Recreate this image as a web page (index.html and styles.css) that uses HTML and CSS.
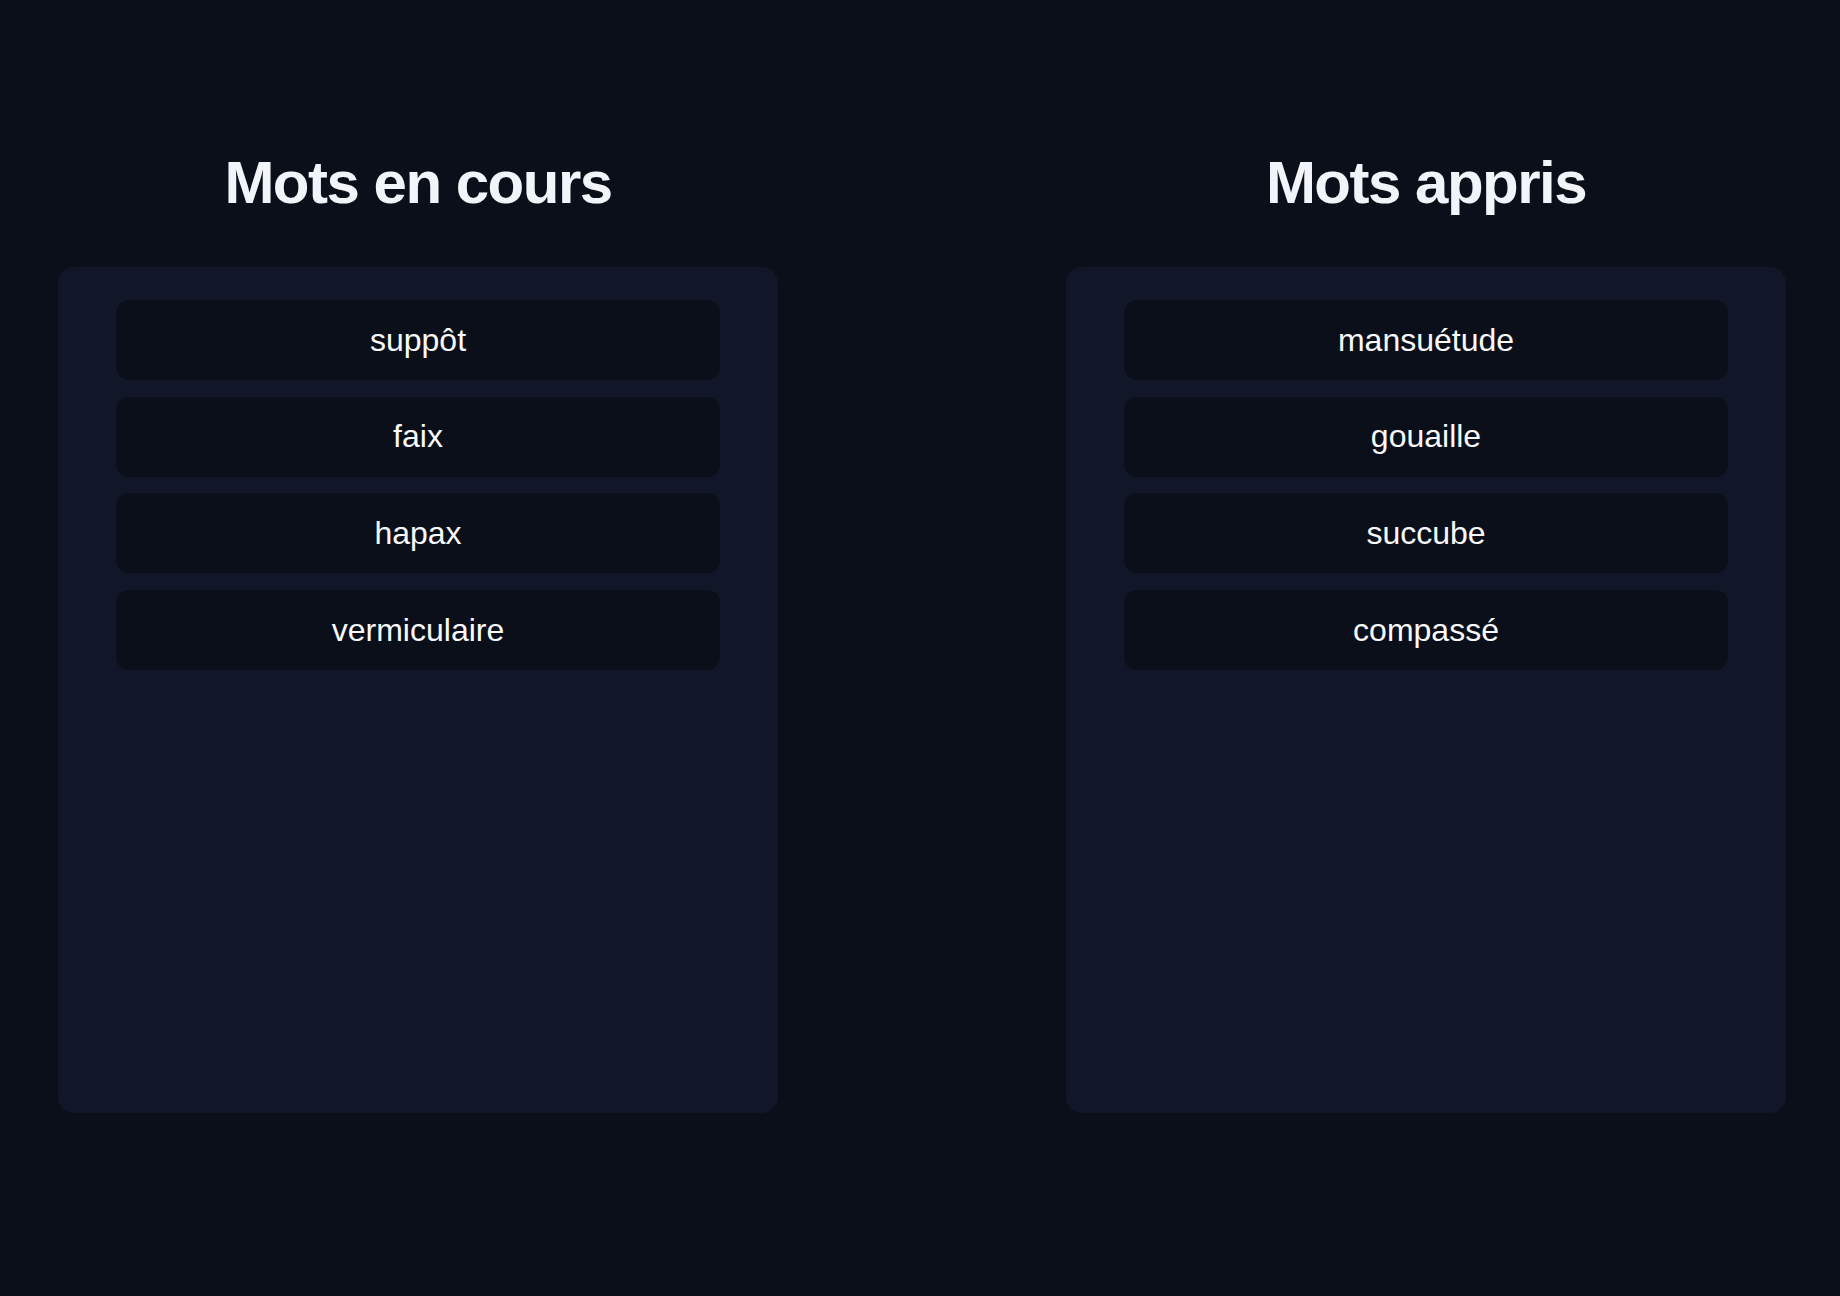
FILE: index.html
```html
<!DOCTYPE html>
<html lang="fr">
<head>
<meta charset="utf-8">
<title>Mots</title>
<link rel="stylesheet" href="styles.css">
</head>
<body>
<main class="board">
  <section class="column">
    <h1 class="column-title">Mots en cours</h1>
    <div class="panel">
      <div class="word">suppôt</div>
      <div class="word">faix</div>
      <div class="word">hapax</div>
      <div class="word">vermiculaire</div>
    </div>
  </section>
  <section class="column">
    <h1 class="column-title">Mots appris</h1>
    <div class="panel">
      <div class="word">mansuétude</div>
      <div class="word">gouaille</div>
      <div class="word">succube</div>
      <div class="word">compassé</div>
    </div>
  </section>
</main>
</body>
</html>
```

FILE: styles.css
```css
html, body {
  margin: 0;
  padding: 0;
  background: #0b0f1a;
  font-family: "Liberation Sans", Arial, Helvetica, sans-serif;
  color: #f1f5f9;
}

.board {
  display: flex;
  gap: 288px;
  padding: 153px 0 0 58px;
}

.column {
  width: 720px;
  display: flex;
  flex-direction: column;
}

.column-title {
  margin: 0 0 54px;
  font-size: 60px;
  line-height: 60px;
  font-weight: 700;
  letter-spacing: -1.5px;
  text-align: center;
  color: #f1f5f9;
}

.panel {
  box-sizing: border-box;
  height: 846px;
  padding: 33px 58px;
  background: #111628;
  border-radius: 16px;
  display: flex;
  flex-direction: column;
  gap: 16.7px;
}

.word {
  height: 80px;
  display: flex;
  align-items: center;
  justify-content: center;
  background: #0b0f1a;
  border-radius: 13px;
  font-size: 32px;
  color: #f8fafc;
}
```
